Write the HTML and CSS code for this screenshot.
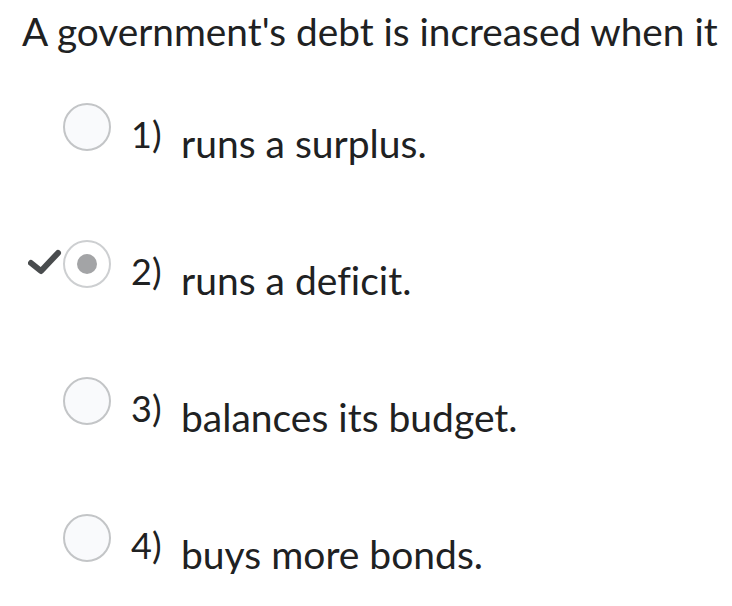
FILE: index.html
```html
<!DOCTYPE html>
<html>
<head>
<meta charset="utf-8">
<link rel="stylesheet" href="styles.css">
</head>
<body>
<div class="question">
  <h1 class="prompt">A government's debt is increased when it</h1>
  <ul class="options">
    <li class="option">
      <span class="mark"></span>
      <span class="radio"></span>
      <span class="num">1)</span>
      <span class="answer">runs a surplus.</span>
    </li>
    <li class="option">
      <span class="mark"><svg width="35" height="28" viewBox="0 0 35 28"><polyline points="3,14 13,22 30,4" fill="none" stroke="#494c4e" stroke-width="6" stroke-linecap="round" stroke-linejoin="round"/></svg></span>
      <span class="radio selected"><span class="dot"></span></span>
      <span class="num">2)</span>
      <span class="answer">runs a deficit.</span>
    </li>
    <li class="option">
      <span class="mark"></span>
      <span class="radio"></span>
      <span class="num">3)</span>
      <span class="answer">balances its budget.</span>
    </li>
    <li class="option">
      <span class="mark"></span>
      <span class="radio"></span>
      <span class="num">4)</span>
      <span class="answer">buys more bonds.</span>
    </li>
  </ul>
</div>
</body>
</html>
```
FILE: styles.css
```css
html, body {
  margin: 0;
  padding: 0;
  background: #ffffff;
}
body {
  font-family: Lato, "Noto Sans", sans-serif;
  color: #202122;
  font-variant-ligatures: none;
}
.question {
  padding: 7px 0 0 22px;
}
.prompt {
  margin: 0;
  font-weight: 400;
  font-size: 38.8px;
  line-height: 48px;
  white-space: nowrap;
}
.options {
  list-style: none;
  margin: 48px 0 0 0;
  padding: 0 0 0 6px;
}
.option {
  display: flex;
  align-items: flex-start;
  height: 137px;
}
.option:last-child {
  height: auto;
}
.mark {
  width: 35px;
  height: 48px;
  display: flex;
  align-items: flex-start;
  padding-top: 9px;
  box-sizing: border-box;
}
.radio {
  width: 48px;
  height: 48px;
  box-sizing: border-box;
  border: 2px solid #c3c5c7;
  border-radius: 50%;
  background: #f9fafc;
  display: flex;
  align-items: center;
  justify-content: center;
  flex: none;
}
.radio.selected {
  background: #ffffff;
  border-color: #cdcfd1;
}
.dot {
  width: 20px;
  height: 20px;
  border-radius: 50%;
  background: #a3a4a6;
}
.num {
  margin-left: 20px;
  width: 50px;
  font-size: 36px;
  line-height: 40px;
  margin-top: 11px;
}
.answer {
  font-size: 39px;
  line-height: 40px;
  margin-top: 20px;
  white-space: nowrap;
}
```
